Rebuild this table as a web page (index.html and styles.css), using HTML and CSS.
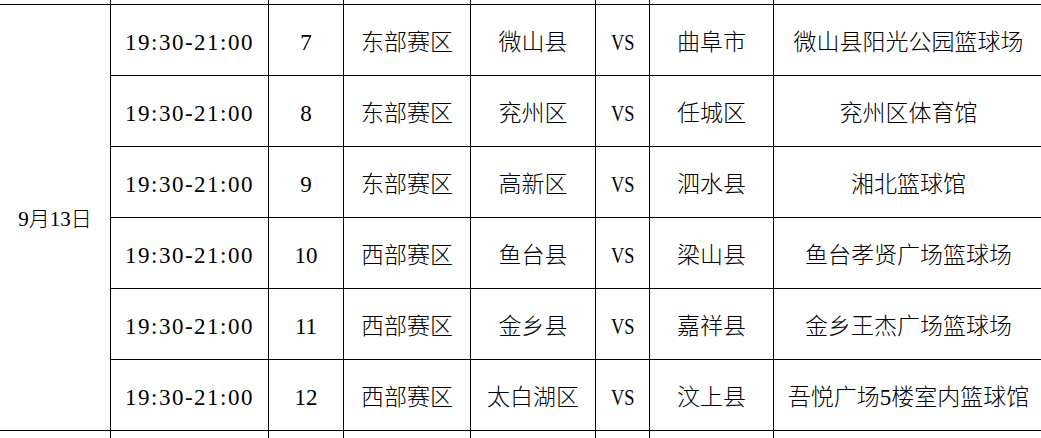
FILE: index.html
```html
<!DOCTYPE html>
<html lang="zh-CN">
<head>
<meta charset="utf-8">
<title>赛程</title>
<link rel="stylesheet" href="styles.css">
</head>
<body>
<div class="sheet">
  <div class="cell stub"></div><div class="cell stub"></div><div class="cell stub"></div><div class="cell stub"></div><div class="cell stub"></div><div class="cell stub"></div><div class="cell stub"></div><div class="cell stub"></div>

  <div class="cell date">9月13日</div>

  <div class="cell time">19:30-21:00</div><div class="cell">7</div><div class="cell">东部赛区</div><div class="cell">微山县</div><div class="cell"><span class="vs">VS</span></div><div class="cell">曲阜市</div><div class="cell">微山县阳光公园篮球场</div>
  <div class="cell time">19:30-21:00</div><div class="cell">8</div><div class="cell">东部赛区</div><div class="cell">兖州区</div><div class="cell"><span class="vs">VS</span></div><div class="cell">任城区</div><div class="cell">兖州区体育馆</div>
  <div class="cell time">19:30-21:00</div><div class="cell">9</div><div class="cell">东部赛区</div><div class="cell">高新区</div><div class="cell"><span class="vs">VS</span></div><div class="cell">泗水县</div><div class="cell">湘北篮球馆</div>
  <div class="cell time">19:30-21:00</div><div class="cell">10</div><div class="cell">西部赛区</div><div class="cell">鱼台县</div><div class="cell"><span class="vs">VS</span></div><div class="cell">梁山县</div><div class="cell">鱼台孝贤广场篮球场</div>
  <div class="cell time">19:30-21:00</div><div class="cell">11</div><div class="cell">西部赛区</div><div class="cell">金乡县</div><div class="cell"><span class="vs">VS</span></div><div class="cell">嘉祥县</div><div class="cell">金乡王杰广场篮球场</div>
  <div class="cell time">19:30-21:00</div><div class="cell">12</div><div class="cell">西部赛区</div><div class="cell">太白湖区</div><div class="cell"><span class="vs">VS</span></div><div class="cell">汶上县</div><div class="cell">吾悦广场5楼室内篮球馆</div>

  <div class="cell stub"></div><div class="cell stub"></div><div class="cell stub"></div><div class="cell stub"></div><div class="cell stub"></div><div class="cell stub"></div><div class="cell stub"></div><div class="cell stub"></div>
</div>
</body>
</html>
```

FILE: styles.css
```css
html, body {
  margin: 0;
  padding: 0;
  background: #fff;
  overflow: hidden;
}

.sheet {
  display: grid;
  grid-template-columns: 110px 157px 74px 126px 124px 53px 123px 269px;
  grid-template-rows: 4px repeat(6, 70px) 20px;
  gap: 1px;
  background: #000;
  width: 1043px;
  font-family: "Liberation Serif", "Noto Sans CJK SC", serif;
  font-size: 23px;
  font-weight: 300;
  color: #000;
}

.cell {
  background: #fff;
  display: flex;
  align-items: center;
  justify-content: center;
  padding-top: 4px;
  box-sizing: border-box;
  white-space: nowrap;
  line-height: 1;
}

.stub {
  padding: 0;
}

.date {
  grid-column: 1;
  grid-row: 2 / span 6;
  font-size: 21px;
}

.time {
  letter-spacing: 1.5px;
}

.vs {
  display: inline-block;
  transform: scaleX(0.8);
}
```
